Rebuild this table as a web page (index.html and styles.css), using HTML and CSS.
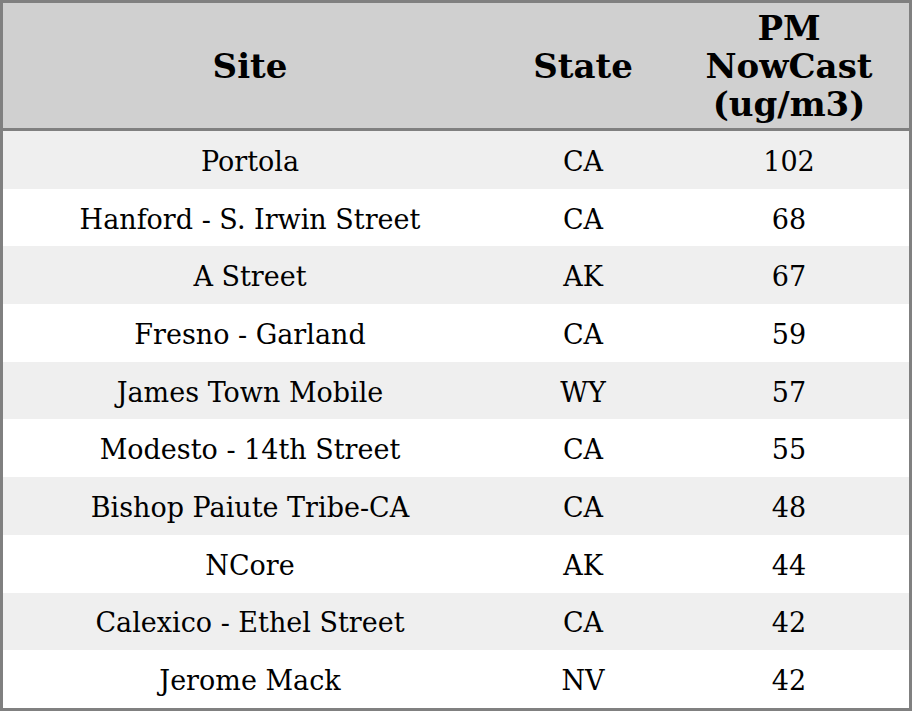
FILE: index.html
```html
<!DOCTYPE html>
<html>
<head>
<meta charset="utf-8">
<link rel="stylesheet" href="styles.css">
</head>
<body>
<table class="aq">
  <colgroup>
    <col class="c-site">
    <col class="c-state">
    <col class="c-pm">
  </colgroup>
  <thead>
    <tr>
      <th>Site</th>
      <th>State</th>
      <th>PM NowCast (ug/m3)</th>
    </tr>
  </thead>
  <tbody>
    <tr><td>Portola</td><td>CA</td><td>102</td></tr>
    <tr><td>Hanford - S. Irwin Street</td><td>CA</td><td>68</td></tr>
    <tr><td>A Street</td><td>AK</td><td>67</td></tr>
    <tr><td>Fresno - Garland</td><td>CA</td><td>59</td></tr>
    <tr><td>James Town Mobile</td><td>WY</td><td>57</td></tr>
    <tr><td>Modesto - 14th Street</td><td>CA</td><td>55</td></tr>
    <tr><td>Bishop Paiute Tribe-CA</td><td>CA</td><td>48</td></tr>
    <tr><td>NCore</td><td>AK</td><td>44</td></tr>
    <tr><td>Calexico - Ethel Street</td><td>CA</td><td>42</td></tr>
    <tr><td>Jerome Mack</td><td>NV</td><td>42</td></tr>
  </tbody>
</table>
</body>
</html>
```
FILE: styles.css
```css
html, body {
  margin: 0;
  padding: 0;
  background: #ffffff;
}
.aq {
  box-sizing: border-box;
  width: 912px;
  height: 711px;
  border: 3px solid #808080;
  border-collapse: separate;
  border-spacing: 0;
  table-layout: fixed;
  font-family: "DejaVu Serif", serif;
  color: #000;
}
.c-site { width: 494px; }
.c-state { width: 172px; }
.c-pm { width: 240px; }
.aq th {
  height: 125px;
  padding: 0;
  background: #d0d0d0;
  border-bottom: 3px solid #808080;
  font-size: 34px;
  font-weight: bold;
  line-height: 38px;
  text-align: center;
  vertical-align: middle;
}
.aq td {
  padding: 3px 0 0 0;
  font-size: 27px;
  text-align: center;
  vertical-align: middle;
}
.aq tbody tr:nth-child(odd) td {
  background: #efefef;
}
```
